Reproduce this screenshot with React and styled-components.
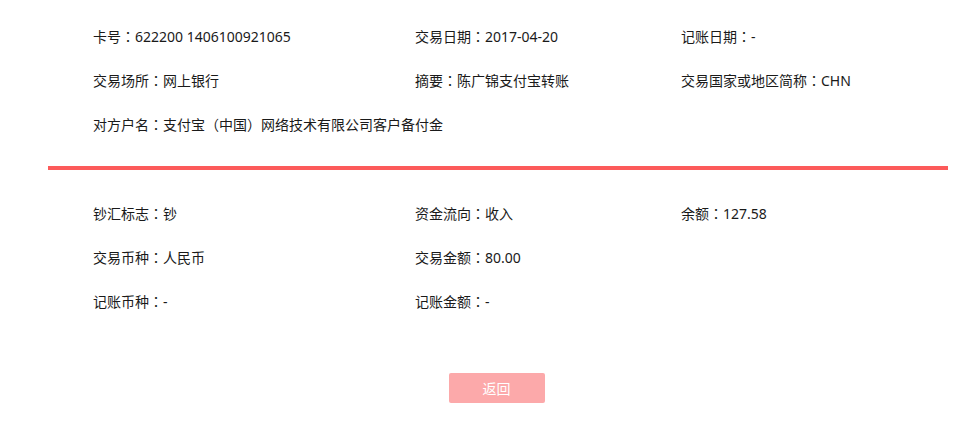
import React from "react";
import styled, { createGlobalStyle } from "styled-components";

const GlobalStyle = createGlobalStyle`
  html, body { margin: 0; padding: 0; background: #fff; }
  body { font-family: "Noto Sans", "Noto Sans CJK SC", sans-serif; color: #1a1a1a; }
`;

const Page = styled.div`
  width: 900px;
  margin-left: 48px;
  padding-top: 14px;
`;

const Section = styled.div`
  display: grid;
  grid-template-columns: 322px 266px 1fr;
  grid-auto-rows: 44px;
  padding: 0 45px;
`;

const Field = styled.div`
  font-size: 14px;
  line-height: 44px;
  white-space: nowrap;
  grid-column: ${(p) => (p.$span ? `span ${p.$span}` : "auto")};
`;

const Punct = styled.span`
  font-family: "Noto Sans CJK TC", "Noto Sans CJK SC", sans-serif;
`;

const Divider = styled.div`
  height: 4px;
  background: #fc5a5a;
  margin: 20px 0 21px;
`;

const Footer = styled.div`
  display: flex;
  justify-content: center;
  padding-top: 50px;
  padding-right: 3px;
`;

const Button = styled.button`
  width: 96px;
  height: 30px;
  border: none;
  border-radius: 2px;
  background: #fca9aa;
  color: #fff;
  font-family: "Noto Sans CJK SC", sans-serif;
  font-size: 14px;
  cursor: pointer;
`;

const renderText = (t) =>
  t.split(/([：（）])/).map((part, i) =>
    /[：（）]/.test(part) ? <Punct key={i}>{part}</Punct> : part
  );

const top = [
  ["卡号：622200 1406100921065"],
  ["交易日期：2017-04-20"],
  ["记账日期：-"],
  ["交易场所：网上银行"],
  ["摘要：陈广锦支付宝转账"],
  ["交易国家或地区简称：CHN"],
  ["对方户名：支付宝（中国）网络技术有限公司客户备付金", 3],
];

const bottom = [
  ["钞汇标志：钞"],
  ["资金流向：收入"],
  ["余额：127.58"],
  ["交易币种：人民币"],
  ["交易金额：80.00"],
  [""],
  ["记账币种：-"],
  ["记账金额：-"],
  [""],
];

export default function App() {
  return (
    <>
      <GlobalStyle />
      <Page>
        <Section>
          {top.map(([t, s], i) => (
            <Field key={i} $span={s}>{renderText(t)}</Field>
          ))}
        </Section>
        <Divider />
        <Section>
          {bottom.map(([t, s], i) => (
            <Field key={i} $span={s}>{renderText(t)}</Field>
          ))}
        </Section>
        <Footer>
          <Button>返回</Button>
        </Footer>
      </Page>
    </>
  );
}
